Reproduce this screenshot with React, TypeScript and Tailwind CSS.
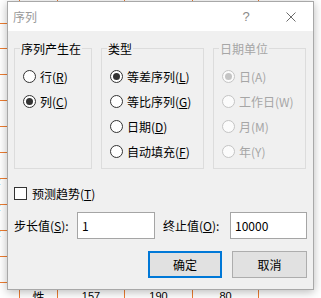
import React from "react";

const rowHeights = [24, 25, 26, 26, 26, 26, 26, 26, 26, 26, 26];
const colon: Record<number, boolean> = { 7: true, 8: true, 9: true };

function Radio({ checked, disabled }: { checked?: boolean; disabled?: boolean }) {
  return (
    <span
      className={
        "w-[13px] h-[13px] rounded-full border flex items-center justify-center shrink-0 " +
        (disabled ? "border-[#c4c4c4] bg-[#fbfbfb]" : "border-[#333333] bg-white")
      }
    >
      {checked && (
        <span className={"w-[7px] h-[7px] rounded-full " + (disabled ? "bg-[#c4c4c4]" : "bg-[#333333]")} />
      )}
    </span>
  );
}

function RadioRow({
  checked,
  disabled,
  children,
}: {
  checked?: boolean;
  disabled?: boolean;
  children: React.ReactNode;
}) {
  return (
    <div className="h-[25px] flex items-center gap-[4px]">
      <Radio checked={checked} disabled={disabled} />
      <span className={"leading-[16px] whitespace-nowrap " + (disabled ? "text-[#a6a6a6]" : "text-black")}>
        {children}
      </span>
    </div>
  );
}

function Group({
  title,
  width,
  disabled,
  children,
}: {
  title: string;
  width: string;
  disabled?: boolean;
  children: React.ReactNode;
}) {
  return (
    <div className={"relative border border-[#dcdcdc] h-[121px] pt-[15px] pl-[8px] shrink-0 " + width}>
      <span
        className={
          "absolute left-[5px] -top-[8px] px-[1px] bg-[#f0f0f0] leading-[16px] whitespace-nowrap " +
          (disabled ? "text-[#a6a6a6]" : "text-black")
        }
      >
        {title}
      </span>
      {children}
    </div>
  );
}

export default function App() {
  return (
    <div className="relative w-[321px] h-[298px] overflow-hidden bg-white font-['Noto_Sans_CJK_SC','Microsoft_YaHei',sans-serif] text-[12px]">
      {/* spreadsheet background */}
      <div className="flex flex-col">
        {rowHeights.map((h, i) => (
          <div key={i} className="flex" style={{ height: h }}>
            <div className="w-[20px] border-r border-b border-[#ed7d31] relative">
              {colon[i] && (
                <span className="absolute -left-[2px] top-[-3px] text-[10px] leading-[12px] text-black font-['Liberation_Sans',sans-serif]">
                  :
                </span>
              )}
            </div>
            <div className="w-[38px] border-r border-b border-[#ed7d31]" />
            <div className="w-[67px] border-r border-b border-[#ed7d31]" />
            <div className="w-[68px] border-r border-b border-[#ed7d31]" />
            <div className="w-[66px] border-r border-b border-[#ed7d31]" />
          </div>
        ))}
        <div className="flex h-[30px] font-['Liberation_Sans',sans-serif] text-[11px] leading-[13px] text-black">
          <div className="w-[20px] border-r border-[#ed7d31]" />
          <div className="w-[38px] border-r border-[#ed7d31] text-center pt-[7px] font-['Noto_Sans_CJK_SC',sans-serif] text-[12px]">
            性
          </div>
          <div className="w-[67px] border-r border-[#ed7d31] text-center pt-[7px]">157</div>
          <div className="w-[68px] border-r border-[#ed7d31] text-center pt-[7px]">190</div>
          <div className="w-[66px] border-r border-[#ed7d31] text-center pt-[7px]">80</div>
        </div>
      </div>

      {/* dialog */}
      <div className="absolute left-[7px] top-[1px] w-[307px] h-[289px] border border-[#a8a8a8] bg-[#f0f0f0] shadow-[0_2px_9px_rgba(0,0,0,0.28)] flex flex-col">
        <div className="h-[29px] bg-white flex items-center justify-between pl-[5px] pr-[17px] shrink-0">
          <span className="text-[#9a9a9a] leading-[16px] pt-[1px]">序列</span>
          <div className="flex items-center">
            <span className="w-[10px] text-center text-[#8a8a8a] font-['Liberation_Sans',sans-serif] text-[13px] leading-[16px]">
              ?
            </span>
            <span className="w-[35px]" />
            <svg width="10" height="10" viewBox="0 0 10 10" className="block">
              <path d="M0.5 0.5 L9.5 9.5 M9.5 0.5 L0.5 9.5" stroke="#6b6b6b" strokeWidth="1" fill="none" />
            </svg>
          </div>
        </div>

        <div className="flex flex-col px-[6px] pt-[17px]">
          <div className="flex gap-[9px]">
            <Group title="序列产生在" width="w-[78px]">
              <RadioRow>
                行(<u>R</u>)
              </RadioRow>
              <RadioRow checked>
                列(<u>C</u>)
              </RadioRow>
            </Group>
            <Group title="类型" width="w-[103px]">
              <RadioRow checked>
                等差序列(<u>L</u>)
              </RadioRow>
              <RadioRow>
                等比序列(<u>G</u>)
              </RadioRow>
              <RadioRow>
                日期(<u>D</u>)
              </RadioRow>
              <RadioRow>
                自动填充(<u>F</u>)
              </RadioRow>
            </Group>
            <Group title="日期单位" width="w-[93px]" disabled>
              <RadioRow checked disabled>
                日(A)
              </RadioRow>
              <RadioRow disabled>工作日(W)</RadioRow>
              <RadioRow disabled>月(M)</RadioRow>
              <RadioRow disabled>年(Y)</RadioRow>
            </Group>
          </div>

          <div className="mt-[18px] h-[13px] flex items-center gap-[5px]">
            <span className="w-[13px] h-[13px] border border-[#333333] bg-white shrink-0" />
            <span className="leading-[16px] text-black whitespace-nowrap">
              预测趋势(<u>T</u>)
            </span>
          </div>

          <div className="mt-[12px] flex items-center">
            <span className="w-[63px] leading-[16px] text-black whitespace-nowrap">
              步长值(<u>S</u>):
            </span>
            <div className="w-[78px] h-[27px] border border-[#a5a5a5] bg-white flex items-center pl-[4px] text-black leading-[16px]">
              1
            </div>
            <span className="ml-[8px] w-[67px] leading-[16px] text-black whitespace-nowrap">
              终止值(<u>O</u>):
            </span>
            <div className="w-[77px] h-[27px] border border-[#a5a5a5] bg-white flex items-center pl-[4px] text-black leading-[16px]">
              10000
            </div>
          </div>

          <div className="mt-[12px] flex justify-end gap-[10px]">
            <div className="w-[74px] h-[27px] border-2 border-[#0078d7] bg-[#e1e1e1] flex items-center justify-center text-black leading-[16px]">
              确定
            </div>
            <div className="w-[75px] h-[27px] border border-[#adadad] bg-[#e1e1e1] flex items-center justify-center text-black leading-[16px]">
              取消
            </div>
          </div>
        </div>
      </div>
    </div>
  );
}
